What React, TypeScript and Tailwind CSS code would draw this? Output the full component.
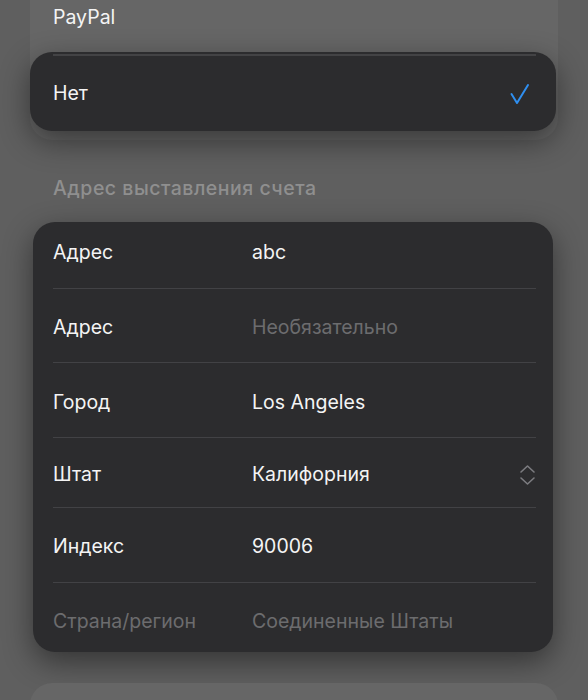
type Row = {
  label: string;
  value: string;
  h: string;
  dimLabel?: boolean;
  placeholder?: boolean;
  select?: boolean;
  last?: boolean;
};

const rows: Row[] = [
  { label: "Адрес", value: "abc", h: "h-[67px] pb-[4px]" },
  { label: "Адрес", value: "Необязательно", h: "h-[74px] pt-[5px]", placeholder: true },
  { label: "Город", value: "Los Angeles", h: "h-[75px] pt-[5px]" },
  { label: "Штат", value: "Калифорния", h: "h-[70px] pt-[5px]", select: true },
  { label: "Индекс", value: "90006", h: "h-[75px] pt-[4px]" },
  { label: "Страна/регион", value: "Соединенные Штаты", h: "h-[69px] pt-[9px]", dimLabel: true, placeholder: true, last: true },
];

function Chevrons() {
  return (
    <svg width="17" height="22" viewBox="0 0 17 22" fill="none" stroke="#7c7c80" strokeWidth="1.6" strokeLinecap="round" strokeLinejoin="round">
      <path d="M2 8 L8.5 2 L15 8" />
      <path d="M2 14 L8.5 20 L15 14" />
    </svg>
  );
}

function Checkmark() {
  return (
    <svg width="21" height="22" viewBox="0 0 21 22" fill="none" stroke="#2f8ff0" strokeWidth="2" strokeLinecap="round" strokeLinejoin="round">
      <path d="M2.5 11 L8 20 L19 2" />
    </svg>
  );
}

export default function App() {
  return (
    <div
      className="w-[588px] h-[700px] overflow-hidden bg-[#5f5f5f] text-[19.5px]"
      style={{ fontFamily: "Inter, 'Noto Sans', sans-serif" }}
    >
      {/* dimmed payment panel with lifted selected option */}
      <div className="ml-[30px] w-[528px] bg-[#666666] rounded-b-[22px] pb-[9px]">
        <div className="h-[52px] pl-[23px] pt-[3px] flex items-start text-[#f4f4f4]">PayPal</div>
        <div className="w-[526px] h-[79px] rounded-[22px] bg-[#2c2c2e] shadow-[0_10px_30px_rgba(0,0,0,0.45)] relative flex items-center pl-[23px] pr-[26px] pt-[4px]">
          <div className="absolute top-[2px] left-[23px] right-[20px] h-[2px] bg-[#434345]" />
          <span className="flex-1 text-[#f4f4f4]">Нет</span>
          <Checkmark />
        </div>
      </div>

      <div className="pl-[53px] pt-[34px] h-[82px] text-[19.5px] tracking-[0.5px] font-medium text-[#8f8f8f]">
        Адрес выставления счета
      </div>

      <div className="ml-[33px] w-[520px] rounded-[22px] bg-[#2c2c2e] shadow-[0_10px_30px_rgba(0,0,0,0.45)] overflow-hidden">
        {rows.map((r, i) => (
          <div key={i} className="pl-[20px] pr-[15px]">
            <div className={`${r.h} flex items-center ${r.last ? "" : "border-b border-[#424245] mr-[2px]"}`}>
              <span className={`w-[199px] ${r.dimLabel ? "text-[#6c6c6e]" : "text-[#f4f4f4]"}`}>{r.label}</span>
              <span className={`flex-1 ${r.placeholder ? "text-[#6c6c6e]" : "text-[#f4f4f4]"}`}>{r.value}</span>
              {r.select && <Chevrons />}
            </div>
          </div>
        ))}
      </div>

      <div className="ml-[30px] mt-[31px] w-[528px] h-[80px] rounded-t-[22px] bg-[#666666]" />
    </div>
  );
}
